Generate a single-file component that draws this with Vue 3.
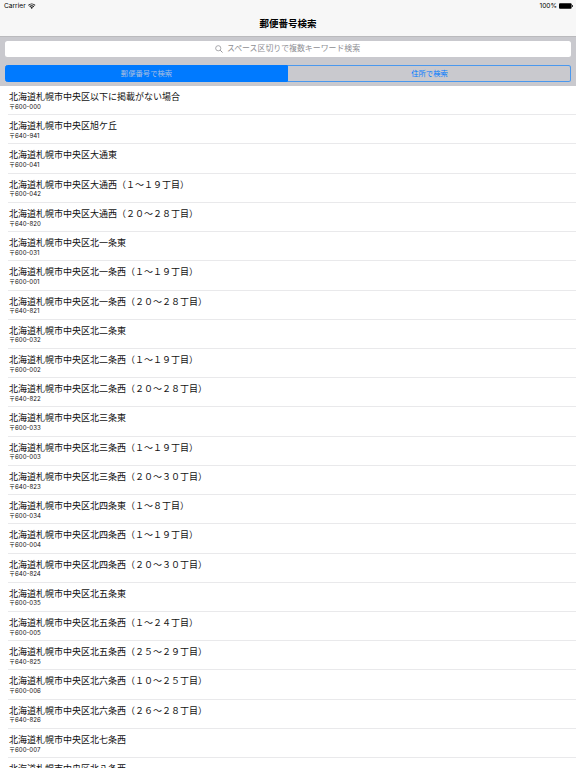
<script setup>
const rows = [
  ['以下に掲載がない場合', '600-000'],
  ['旭ケ丘', '640-941'],
  ['大通東', '600-041'],
  ['大通西（１～１９丁目）', '600-042'],
  ['大通西（２０～２８丁目）', '640-820'],
  ['北一条東', '600-031'],
  ['北一条西（１～１９丁目）', '600-001'],
  ['北一条西（２０～２８丁目）', '640-821'],
  ['北二条東', '600-032'],
  ['北二条西（１～１９丁目）', '600-002'],
  ['北二条西（２０～２８丁目）', '640-822'],
  ['北三条東', '600-033'],
  ['北三条西（１～１９丁目）', '600-003'],
  ['北三条西（２０～３０丁目）', '640-823'],
  ['北四条東（１～８丁目）', '600-034'],
  ['北四条西（１～１９丁目）', '600-004'],
  ['北四条西（２０～３０丁目）', '640-824'],
  ['北五条東', '600-035'],
  ['北五条西（１～２４丁目）', '600-005'],
  ['北五条西（２５～２９丁目）', '640-825'],
  ['北六条西（１０～２５丁目）', '600-006'],
  ['北六条西（２６～２８丁目）', '640-826'],
  ['北七条西', '600-007'],
  ['北八条西', ''],
]
</script>

<template>
  <div class="screen">
    <header class="nav">
      <div class="status">
        <div class="carrier">
          <span>Carrier</span>
          <svg class="wifi" viewBox="0 0 14 11">
            <path d="M.8 4.4a8.8 8.8 0 0 1 12.4 0M3.2 6.9a5.4 5.4 0 0 1 7.6 0" fill="none" stroke="#111" stroke-width="2" />
            <path d="M4.7 8.4a3.2 3.2 0 0 1 4.6 0L7 10.9z" fill="#111" />
          </svg>
        </div>
        <div class="power">
          <span>100%</span>
          <svg class="battery" viewBox="0 0 14 6">
            <rect x="0" y="0.2" width="12.6" height="5.6" rx="1" fill="#000" />
            <path d="M13 2q1 .2 1 1t-1 1z" fill="#000" />
          </svg>
        </div>
      </div>
      <h1 class="title">郵便番号検索</h1>
    </header>
    <section class="tools">
      <div class="search">
        <svg class="glass" viewBox="0 0 16 16">
          <circle cx="6.5" cy="6.5" r="5.2" fill="none" stroke="#8e8e93" stroke-width="1.5" />
          <path d="M10.4 10.4L15 15" stroke="#8e8e93" stroke-width="1.9" />
        </svg>
        <span>スペース区切りで複数キーワード検索</span>
      </div>
      <div class="segments">
        <div class="segment active">郵便番号で検索</div>
        <div class="segment">住所で検索</div>
      </div>
    </section>
    <main class="list">
      <div v-for="row in rows" :key="row[0]" class="row">
        <div class="place">北海道札幌市中央区{{ row[0] }}</div>
        <div v-if="row[1]" class="code">〒{{ row[1] }}</div>
      </div>
    </main>
  </div>
</template>

<style>
body {
  margin: 0;
  background: #fff;
}
</style>

<style scoped>
.screen {
  width: 576px;
  height: 768px;
  overflow: hidden;
  display: flex;
  flex-direction: column;
  background: #fff;
  color: #000;
  font-family: Inter, "Noto Sans CJK JP", sans-serif;
}
.nav {
  box-sizing: border-box;
  flex: none;
  height: 37px;
  background: #f7f7f7;
  border-bottom: 1px solid #bababd;
}
.status {
  display: flex;
  justify-content: space-between;
  height: 12px;
  padding: 0 3px 0 4px;
  font-size: 6.6px;
  line-height: 12px;
}
.carrier,
.power {
  display: flex;
  align-items: center;
}
.carrier {
  gap: 2.5px;
}
.power {
  gap: 2px;
}
.wifi {
  width: 7.5px;
  height: 6px;
}
.battery {
  width: 14px;
  height: 6px;
}
.title {
  margin: 4px 0 0;
  font-size: 9.5px;
  line-height: 16px;
  font-weight: 700;
  text-align: center;
}
.tools {
  box-sizing: border-box;
  flex: none;
  height: 49px;
  padding: 4px 5px 0;
  background: #c9c9ce;
}
.search {
  box-sizing: border-box;
  display: flex;
  align-items: center;
  justify-content: center;
  gap: 4px;
  height: 16px;
  padding-right: 1px;
  border-radius: 2.5px;
  background: #fff;
  color: #8e8e93;
  font-family: "Noto Sans CJK JP", sans-serif;
  font-size: 7.9px;
  line-height: 14px;
}
.search span {
  height: 16px;
}
.glass {
  width: 8px;
  height: 8px;
}
.segments {
  display: flex;
  height: 17px;
  margin-top: 8px;
}
.segment {
  box-sizing: border-box;
  flex: 1;
  padding-left: 1px;
  border: 1px solid #4a98ee;
  border-left: 0;
  border-radius: 0 2.5px 2.5px 0;
  color: #007aff;
  font-size: 7.35px;
  line-height: 15px;
  text-align: center;
}
.active {
  padding-left: 0;
  border: 1px solid #007aff;
  border-radius: 2.5px 0 0 2.5px;
  background: #007aff;
  color: #a9bfdf;
}
.list {
  flex: 1;
  min-height: 0;
  overflow: hidden;
}
.row {
  box-sizing: border-box;
  height: 29.22px;
  margin-left: 8px;
  padding: 5px 0 0 1px;
  border-bottom: 1px solid #e9e9eb;
}
.place {
  font-family: "Noto Sans CJK JP", sans-serif;
  font-size: 9px;
  line-height: 12px;
  white-space: nowrap;
  color: #111;
}
.code {
  margin-top: -0.3px;
  font-size: 6.1px;
  line-height: 7px;
  color: #111;
}
</style>
